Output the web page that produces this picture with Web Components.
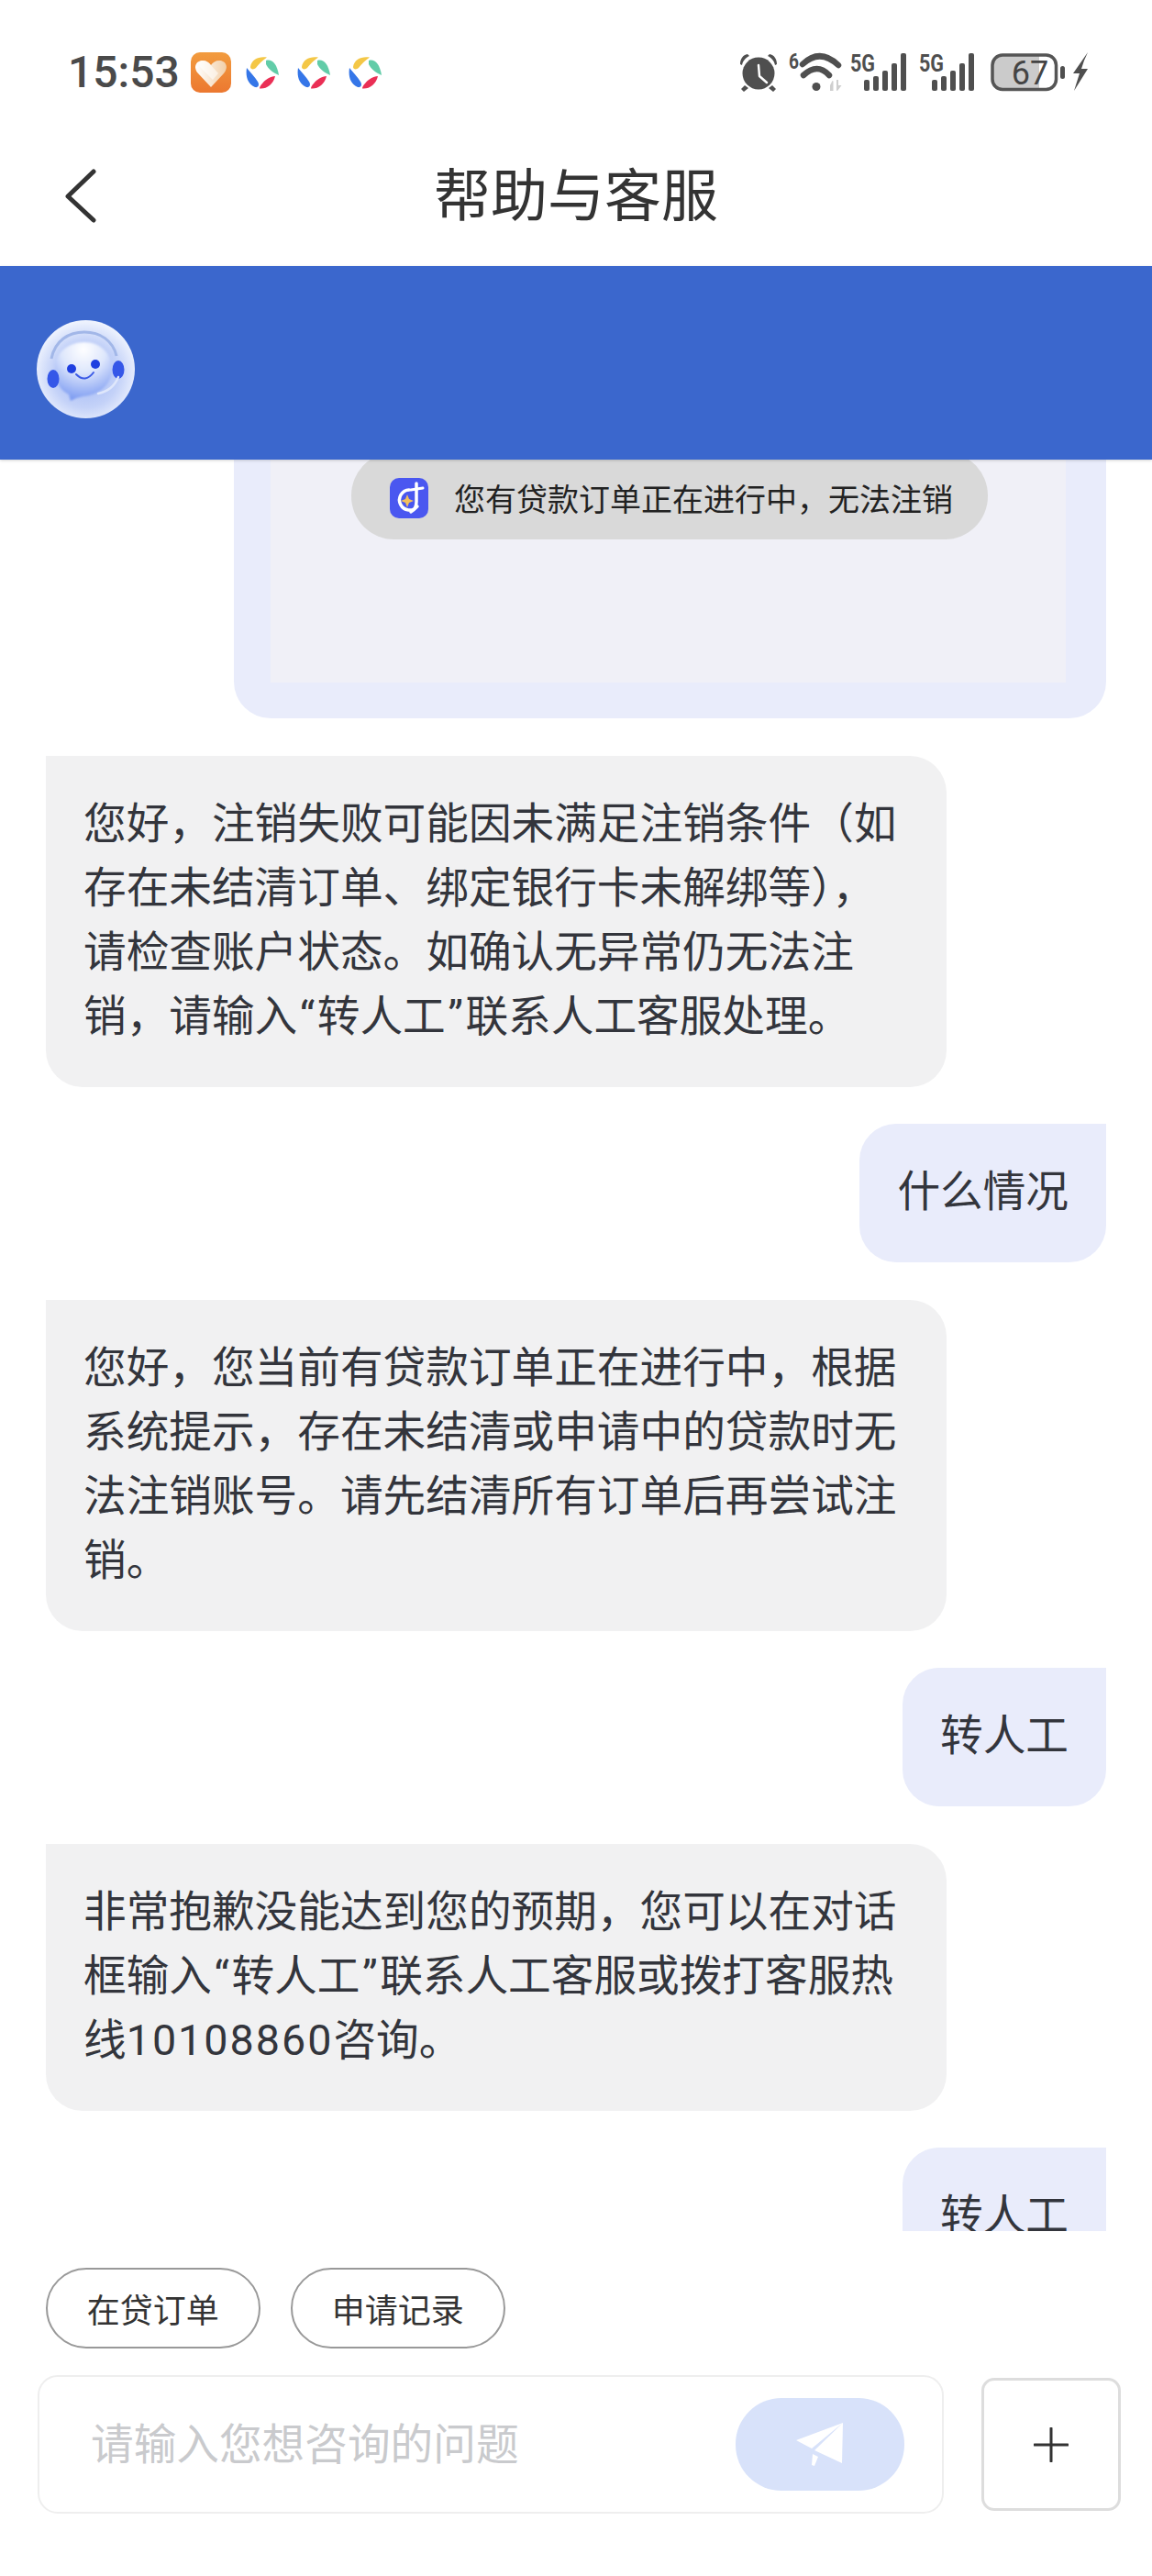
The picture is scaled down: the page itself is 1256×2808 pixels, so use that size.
<!DOCTYPE html>
<html lang="zh-CN">
<head>
<meta charset="utf-8">
<title>帮助与客服</title>
<style>
  html, body {
    margin: 0;
    background: #fff;
  }
  body {
    width: 1256px;
    height: 2808px;
    overflow: hidden;
    font-family: Roboto, "Noto Sans CJK SC", sans-serif;
    color: #33353c;
  }
  #app {
    display: flex;
    flex-direction: column;
    height: 2808px;
  }
  /* quotes and digits run wider on the phone than in Roboto */
  .q {
    padding: 0 2.500px;
  }
  .num {
    letter-spacing: 2px;
  }
  .ln {
    display: block;
    white-space: nowrap;
  }
</style>
</head>
<body>
<div id="app">
  <status-bar></status-bar>
  <nav-bar>帮助与客服</nav-bar>
  <agent-header></agent-header>
  <chat-log>
    <shot-bubble>您有贷款订单正在进行中，无法注销</shot-bubble>
    <chat-bubble side="bot">
      <span class="ln">您好，注销失败可能因未满足注销条件（如</span>
      <span class="ln">存在未结清订单、绑定银行卡未解绑等），</span>
      <span class="ln">请检查账户状态。如确认无异常仍无法注</span>
      <span class="ln">销，请输入<span class="q">“</span>转人工<span class="q">”</span>联系人工客服处理。</span>
    </chat-bubble>
    <chat-bubble side="user">什么情况</chat-bubble>
    <chat-bubble side="bot">您好，您当前有贷款订单正在进行中，根据系统提示，存在未结清或申请中的贷款时无法注销账号。请先结清所有订单后再尝试注销。</chat-bubble>
    <chat-bubble side="user">转人工</chat-bubble>
    <chat-bubble side="bot">
      <span class="ln">非常抱歉没能达到您的预期，您可以在对话</span>
      <span class="ln">框输入<span class="q">“</span>转人工<span class="q">”</span>联系人工客服或拨打客服热</span>
      <span class="ln">线<span class="num">10108860</span>咨询。</span>
    </chat-bubble>
    <chat-bubble side="user">转人工</chat-bubble>
  </chat-log>
  <quick-chips>
    <quick-chip>在贷订单</quick-chip>
    <quick-chip>申请记录</quick-chip>
  </quick-chips>
  <chat-composer placeholder="请输入您想咨询的问题"></chat-composer>
</div>

<script>
// the little multicolour app badge repeats three times in the status bar
const petals = `
  <svg width="36" height="36" viewBox="0 0 36 36">
    <path fill="#f4c746" d="M23 1.5C14 0 6 4 5 12c0 3 4 3 6 1 3-4 7-8 12-11.500z"/>
    <path fill="#62cca8" d="M22 5c6-2 12 3 14 16-5-2-12-7-14-12z"/>
    <path fill="#3576e8" d="M1 13c-1.500 9 1 18 9 21 4 1 5-3 3-6-3-5-8-10-12-15z"/>
    <path fill="#ea2f55" d="M15 35.500c7 1 15-4.500 17-13.500-5 0-11 4-14 8-2 2-3 4-3 5.500z"/>
  </svg>`;

class StatusBar extends HTMLElement {
  constructor() {
    super();
    this.shadow = this.attachShadow({ mode: "open" });
    this.shadow.innerHTML = `
      <style>
        :host {
          display: block;
          height: 136px;
          flex: none;
          box-sizing: border-box;
          padding: 57px 70px 0 74px;
        }
        .row {
          display: flex;
          align-items: center;
          height: 44px;
        }
        .time {
          font: 500 48px/44px Roboto, sans-serif;
          color: #4a4a4a;
          width: 134px;
        }
        .heart {
          width: 44px;
          height: 44px;
          margin-right: 16px;
        }
        .apps {
          display: flex;
          gap: 20px;
        }
        .right {
          margin: -10px 0 -10px auto;
          display: block;
        }
        text {
          font-family: Roboto, sans-serif;
          fill: #4f4f4f;
        }
      </style>
      <div class="row">
        <span class="time">15:53</span>
        <svg class="heart" viewBox="0 0 44 44">
          <defs>
            <linearGradient id="org" x1="0" y1="0" x2="0" y2="1">
              <stop offset="0" stop-color="#f29c3f"/>
              <stop offset="1" stop-color="#ec7830"/>
            </linearGradient>
            <linearGradient id="hrt" x1="0" y1="0" x2="1" y2="0">
              <stop offset="0" stop-color="#fff"/>
              <stop offset="1" stop-color="#f2cfa8"/>
            </linearGradient>
          </defs>
          <rect width="44" height="44" rx="10" fill="url(#org)"/>
          <path fill="url(#hrt)" d="M22 38 8 23C2 16 6 9 13 9c4 0 7 2 9 5 2-3 5-5 9-5 7 0 11 7 5 14z"/>
          <path fill="#fff" opacity=".55" d="M13 9c3 0 6 1.500 8 4l9 10-6 7-13-13c-3-4-2-8 2-8z"/>
        </svg>
        <div class="apps">${petals}${petals}${petals}</div>
        <svg class="right" width="380" height="64" viewBox="806 47 380 64">
          <!-- alarm -->
          <g fill="#4f4f4f">
            <circle cx="827" cy="80" r="17.500"/>
            <path d="M807 70c0-6 3-10 8-11l2 2c-4 2-7 5-8 10zM847 70c0-6-3-10-8-11l-2 2c4 2 7 5 8 10z"/>
            <path d="M812 93l4 3-5 4-3-3zM842 93l-4 3 5 4 3-3z"/>
          </g>
          <path d="M827 71l1 12 8 7" fill="none" stroke="#fff" stroke-width="2.500" stroke-linecap="round" stroke-linejoin="round"/>
          <!-- wifi -->
          <text x="860" y="75" font-size="24" font-weight="700" textLength="11" lengthAdjust="spacingAndGlyphs">6</text>
          <g fill="none" stroke="#4f4f4f" stroke-width="6.500" stroke-linecap="round">
            <path d="M875 70Q894 52 914 71"/>
            <path d="M876 82Q891 68 904 82"/>
          </g>
          <circle cx="890" cy="94.500" r="4.500" fill="#4f4f4f"/>
          <path d="M905 99V93l2.500-5 1 .5V99zM912 87v12l1.500-.5 4-5.500h-3.500V87z" fill="#cfcfcf"/>
          <!-- sim 1 -->
          <text x="927" y="78" font-size="25" font-weight="700" textLength="27" lengthAdjust="spacingAndGlyphs">5G</text>
          <g fill="#4f4f4f">
            <rect x="942" y="87" width="6" height="12" rx="2"/>
            <rect x="952" y="83" width="6" height="16" rx="2"/>
            <rect x="962" y="77" width="6" height="22" rx="2"/>
            <rect x="972" y="69" width="6" height="30" rx="2"/>
            <rect x="982" y="58" width="6" height="41" rx="2"/>
          </g>
          <!-- sim 2 -->
          <text x="1002" y="78" font-size="25" font-weight="700" textLength="27" lengthAdjust="spacingAndGlyphs">5G</text>
          <g fill="#4f4f4f">
            <rect x="1016" y="87" width="6" height="12" rx="2"/>
            <rect x="1026" y="83" width="6" height="16" rx="2"/>
            <rect x="1036" y="77" width="6" height="22" rx="2"/>
            <rect x="1046" y="69" width="6" height="30" rx="2"/>
            <rect x="1056" y="58" width="6" height="41" rx="2"/>
          </g>
          <!-- battery -->
          <path d="M1092 60H1133V97H1092a10 10 0 0 1-10-10V70a10 10 0 0 1 10-10z" fill="#cbcbcb"/>
          <rect x="1082" y="60" width="69.500" height="37.500" rx="11" fill="none" stroke="#555" stroke-width="3.500"/>
          <text x="1123" y="92" font-size="36" text-anchor="middle" style="fill:#444">67</text>
          <rect x="1156" y="72" width="5" height="14" rx="2.500" fill="#4f4f4f"/>
          <path d="M1186 57 1170 80h7l-6 19 15-24h-7l3-9z" fill="#4f4f4f"/>
        </svg>
      </div>
    `;
  }
}

class NavBar extends HTMLElement {
  constructor() {
    super();
    this.shadow = this.attachShadow({ mode: "open" });
    this.shadow.innerHTML = `
      <style>
        :host {
          display: grid;
          grid-template-columns: 200px 1fr 200px;
          align-items: center;
          flex: none;
          height: 154px;
          color: #333;
        }
        svg {
          display: block;
          margin-left: 67px;
        }
        .title {
          font-size: 62px;
          line-height: 80px;
          padding-top: 3px;
          text-align: center;
        }
      </style>
      <svg width="38" height="60" viewBox="0 0 38 60">
        <path d="M35 4 7 31l28 26" fill="none" stroke="#333" stroke-width="5" stroke-linecap="round" stroke-linejoin="round"/>
      </svg>
      <div class="title"><slot></slot></div>
    `;
  }
}

class AgentHeader extends HTMLElement {
  constructor() {
    super();
    this.shadow = this.attachShadow({ mode: "open" });
    this.shadow.innerHTML = `
      <style>
        :host {
          display: flex;
          align-items: center;
          flex: none;
          position: relative;
          z-index: 1;
          height: 211px;
          box-sizing: border-box;
          padding: 14px 0 0 40px;
          background: #3b67cd;
          box-shadow: 0 1px 3px rgba(0,0,0,.18);
        }
        svg {
          display: block;
        }
      </style>
      <svg width="107" height="107" viewBox="0 0 107 107">
        <defs>
          <radialGradient id="disc" cx=".5" cy=".55" r=".55">
            <stop offset="0" stop-color="#9fb6f4"/>
            <stop offset=".62" stop-color="#c4d2f8"/>
            <stop offset="1" stop-color="#f1f5fe"/>
          </radialGradient>
          <radialGradient id="head" cx=".5" cy=".12" r=".95">
            <stop offset="0" stop-color="#fff"/>
            <stop offset=".42" stop-color="#dde6fc"/>
            <stop offset="1" stop-color="#6d8ff0"/>
          </radialGradient>
          <filter id="soft" x="-20%" y="-20%" width="140%" height="140%">
            <feGaussianBlur stdDeviation="1"/>
          </filter>
        </defs>
        <circle cx="53.500" cy="53.500" r="53.500" fill="url(#disc)"/>
        <path d="M16 42C20 22 35 13 52 13s31 9 35 26" fill="none" stroke="#a2b7e8" stroke-width="3"/>
        <path filter="url(#soft)" d="M52 24c18 0 30 13 30 29 0 15-11 26-25 29-7 1-13 2-20 6l-2-7C23 75 20 64 20 52c0-16 14-28 32-28z" fill="url(#head)"/>
        <ellipse cx="18" cy="64" rx="6.500" ry="10" fill="#3557e8"/>
        <ellipse cx="89" cy="54" rx="6.500" ry="10" fill="#3557e8"/>
        <circle cx="38" cy="53" r="5" fill="#1f3fe0"/>
        <circle cx="64" cy="48" r="5" fill="#1f3fe0"/>
        <path d="M43 59Q53 69 62 57" fill="none" stroke="#3b5be6" stroke-width="2" stroke-linecap="round"/>
        <path d="M89 62C85 72 77 78 67 80" fill="none" stroke="#dfe7fb" stroke-width="2.500" stroke-linecap="round"/>
      </svg>
    `;
  }
}

class ChatLog extends HTMLElement {
  constructor() {
    super();
    this.shadow = this.attachShadow({ mode: "open" });
    this.shadow.innerHTML = `
      <style>
        :host {
          display: flex;
          flex-direction: column;
          gap: 40.500px;
          flex: none;
          height: 1931px;
          overflow: hidden;
        }
      </style>
      <slot></slot>
    `;
  }
}

class ShotBubble extends HTMLElement {
  constructor() {
    super();
    this.shadow = this.attachShadow({ mode: "open" });
    this.shadow.innerHTML = `
      <style>
        :host {
          display: block;
          flex: none;
          align-self: flex-end;
          width: 951px;
          margin-right: 50px;
          box-sizing: border-box;
          padding: 0 44px 39px 40px;
          background: #e9ecfb;
          border-radius: 0 0 40px 40px;
        }
        .shot {
          height: 243px;
          background: #f0f0f7;
          overflow: hidden;
        }
        .toast {
          display: flex;
          align-items: center;
          gap: 28px;
          box-sizing: border-box;
          width: 694px;
          height: 95px;
          margin: -8px 0 0 88px;
          padding: 4px 0 0 42px;
          border-radius: 47px;
          background: #d9d9d9;
          font-size: 34px;
          color: #222;
          white-space: nowrap;
        }
        svg {
          flex: none;
          display: block;
        }
      </style>
      <div class="shot">
        <div class="toast">
          <svg width="42" height="44" viewBox="0 0 42 44">
            <rect width="42" height="44" rx="10" fill="#4a57f0"/>
            <path d="M21 13a11 11 0 1 0 9 18" fill="none" stroke="#fff" stroke-width="3.500" stroke-linecap="round"/>
            <path d="M29 6v20q0 8-6 11" fill="none" stroke="#fff" stroke-width="3.500" stroke-linecap="round"/>
            <path d="M23 13l13-2" fill="none" stroke="#fff" stroke-width="3" stroke-linecap="round"/>
            <path d="M19 18l2 5 5 2-5 2-2 5-2-5-5-2 5-2z" fill="#f3bf5c"/>
          </svg>
          <span><slot></slot></span>
        </div>
      </div>
    `;
  }
}

class ChatBubble extends HTMLElement {
  constructor() {
    super();
    this.shadow = this.attachShadow({ mode: "open" });
    this.shadow.innerHTML = `
      <style>
        :host {
          display: block;
          flex: none;
          box-sizing: border-box;
          padding: 39px 41px 42px;
          font-size: 46.670px;
          line-height: 70px;
          color: #33353c;
        }
        :host([side="bot"]) {
          align-self: flex-start;
          width: 982px;
          margin-left: 50px;
          background: #f1f1f2;
          border-radius: 0 40px 40px 40px;
        }
        :host([side="user"]) {
          align-self: flex-end;
          margin-right: 50px;
          background: #e9ecfb;
          border-radius: 40px 0 40px 40px;
        }
      </style>
      <slot></slot>
    `;
  }
}

class QuickChips extends HTMLElement {
  constructor() {
    super();
    this.shadow = this.attachShadow({ mode: "open" });
    this.shadow.innerHTML = `
      <style>
        :host {
          display: flex;
          gap: 33.500px;
          flex: none;
          padding: 40px 0 0 50px;
        }
      </style>
      <slot></slot>
    `;
  }
}

class QuickChip extends HTMLElement {
  constructor() {
    super();
    this.shadow = this.attachShadow({ mode: "open" });
    this.shadow.innerHTML = `
      <style>
        :host {
          display: flex;
          align-items: center;
          justify-content: center;
          box-sizing: border-box;
          width: 233.500px;
          height: 88px;
          border: 2.500px solid #999;
          border-radius: 44px;
          font-size: 36px;
          color: #333;
        }
      </style>
      <slot></slot>
    `;
  }
}

class ChatComposer extends HTMLElement {
  constructor() {
    super();
    this.shadow = this.attachShadow({ mode: "open" });
    this.shadow.innerHTML = `
      <style>
        :host {
          display: flex;
          align-items: center;
          gap: 41.500px;
          flex: none;
          margin-top: 29px;
          padding-left: 41px;
        }
        .input {
          display: flex;
          align-items: center;
          box-sizing: border-box;
          width: 987.500px;
          height: 151px;
          padding: 0 41px 0 56px;
          border: 2px solid #eee;
          border-radius: 22px;
        }
        .hint {
          flex: 1;
          padding-bottom: 8px;
          font-size: 46.670px;
          color: #c9cacd;
        }
        .send {
          display: flex;
          align-items: center;
          justify-content: center;
          width: 184px;
          height: 101px;
          border-radius: 50px;
          background: #d8e2fa;
        }
        .plus {
          display: flex;
          align-items: center;
          justify-content: center;
          box-sizing: border-box;
          width: 152px;
          height: 145px;
          border: 3px solid #ddd;
          border-radius: 14px;
        }
        svg {
          display: block;
        }
      </style>
      <div class="input">
        <span class="hint"></span>
        <div class="send">
          <svg width="52" height="48" viewBox="868 2641 52 48">
            <path fill="#fff" d="M919 2641 868 2660l17 9zM919 2641l-31 30 30 14zM886 2675l6 3-4 10-3-1z"/>
          </svg>
        </div>
      </div>
      <div class="plus">
        <svg width="38" height="38" viewBox="0 0 38 38">
          <path d="M19 1v36M1 19h36" stroke="#333" stroke-width="3" stroke-linecap="round"/>
        </svg>
      </div>
    `;
    this.shadow.querySelector('.hint').textContent = this.getAttribute('placeholder');
  }
}

customElements.define('status-bar', StatusBar);
customElements.define('nav-bar', NavBar);
customElements.define('agent-header', AgentHeader);
customElements.define('chat-log', ChatLog);
customElements.define('shot-bubble', ShotBubble);
customElements.define('chat-bubble', ChatBubble);
customElements.define('quick-chips', QuickChips);
customElements.define('quick-chip', QuickChip);
customElements.define('chat-composer', ChatComposer);
</script>
</body>
</html>
